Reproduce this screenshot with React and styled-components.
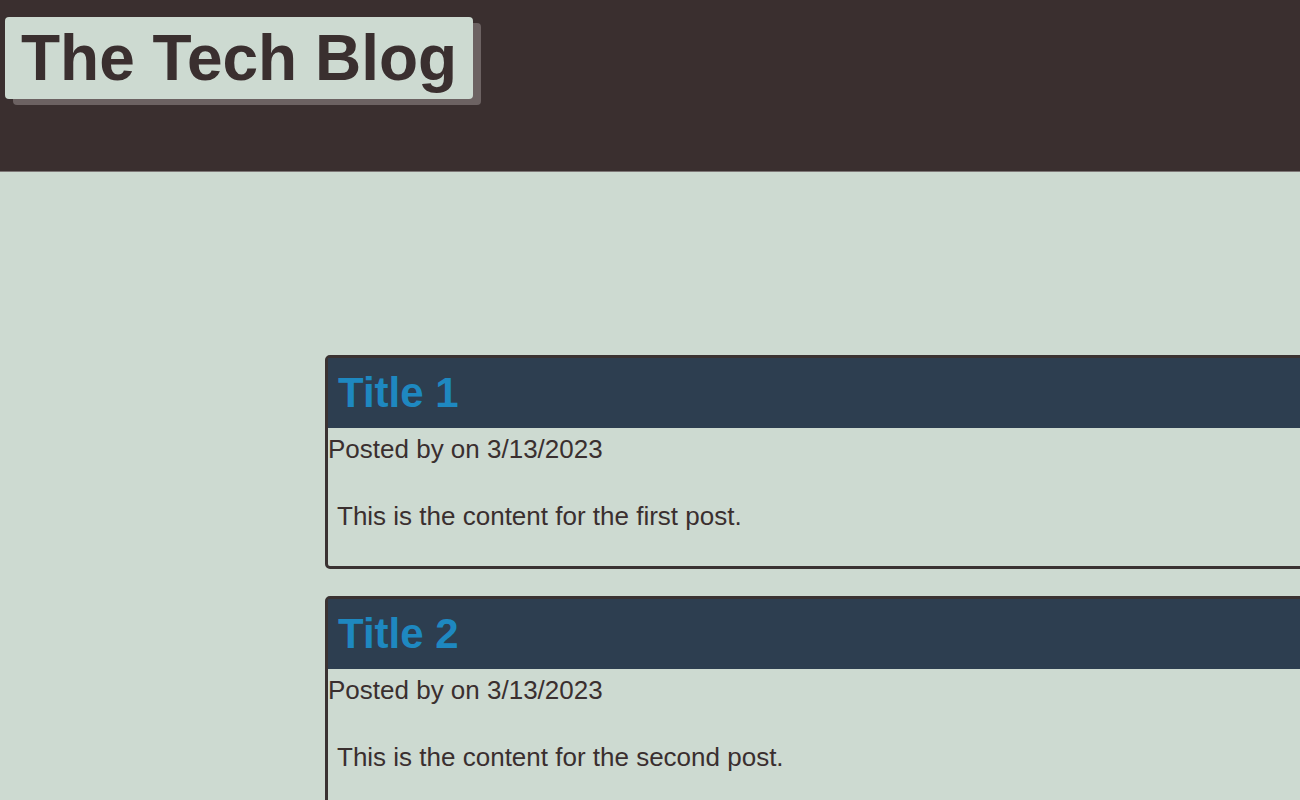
import React from "react";
import styled, { createGlobalStyle } from "styled-components";

const GlobalStyle = createGlobalStyle`
  html, body {
    margin: 0;
    padding: 0;
    background: #cddad1;
    font-family: "Liberation Sans", Arial, sans-serif;
    color: #3a2f2f;
    overflow: hidden;
  }
`;

const Header = styled.header`
  background: #3a2f2f;
  height: 172px;
  border-bottom: 1px solid #7d7676;
  padding: 17px 5px 0;
  box-sizing: border-box;
`;

const Logo = styled.h1`
  display: inline-block;
  margin: 0;
  padding: 0 16px;
  background: #cddad1;
  color: #3a2f2f;
  font-size: 64px;
  font-weight: 700;
  line-height: 82px;
  border-radius: 4px;
  box-shadow: 8px 6px 0 #6c6262;
`;

const Main = styled.main`
  padding-top: 183px;
`;

const Card = styled.article`
  margin: 0 0 27px 25%;
  width: 100%;
  border: 3px solid #3a3232;
  border-radius: 5px;
`;

const CardHeader = styled.div`
  background: #2d3e50;
  height: 70px;
  display: flex;
  align-items: center;
  padding: 0 10px;
`;

const Title = styled.h2`
  margin: 0;
  color: #1e88c0;
  font-size: 42px;
  font-weight: 700;
`;

const Meta = styled.p`
  margin: 6px 0 0;
  font-size: 26px;
  line-height: 30px;
`;

const Body = styled.p`
  margin: 0;
  padding: 37px 9px 35px;
  font-size: 26px;
  line-height: 30px;
`;

const posts = [
  { title: "Title 1", date: "3/13/2023", content: "This is the content for the first post." },
  { title: "Title 2", date: "3/13/2023", content: "This is the content for the second post." },
];

export default function App() {
  return (
    <>
      <GlobalStyle />
      <Header>
        <Logo>The Tech Blog</Logo>
      </Header>
      <Main>
        {posts.map((p) => (
          <Card key={p.title}>
            <CardHeader>
              <Title>{p.title}</Title>
            </CardHeader>
            <Meta>Posted by on {p.date}</Meta>
            <Body>{p.content}</Body>
          </Card>
        ))}
      </Main>
    </>
  );
}
